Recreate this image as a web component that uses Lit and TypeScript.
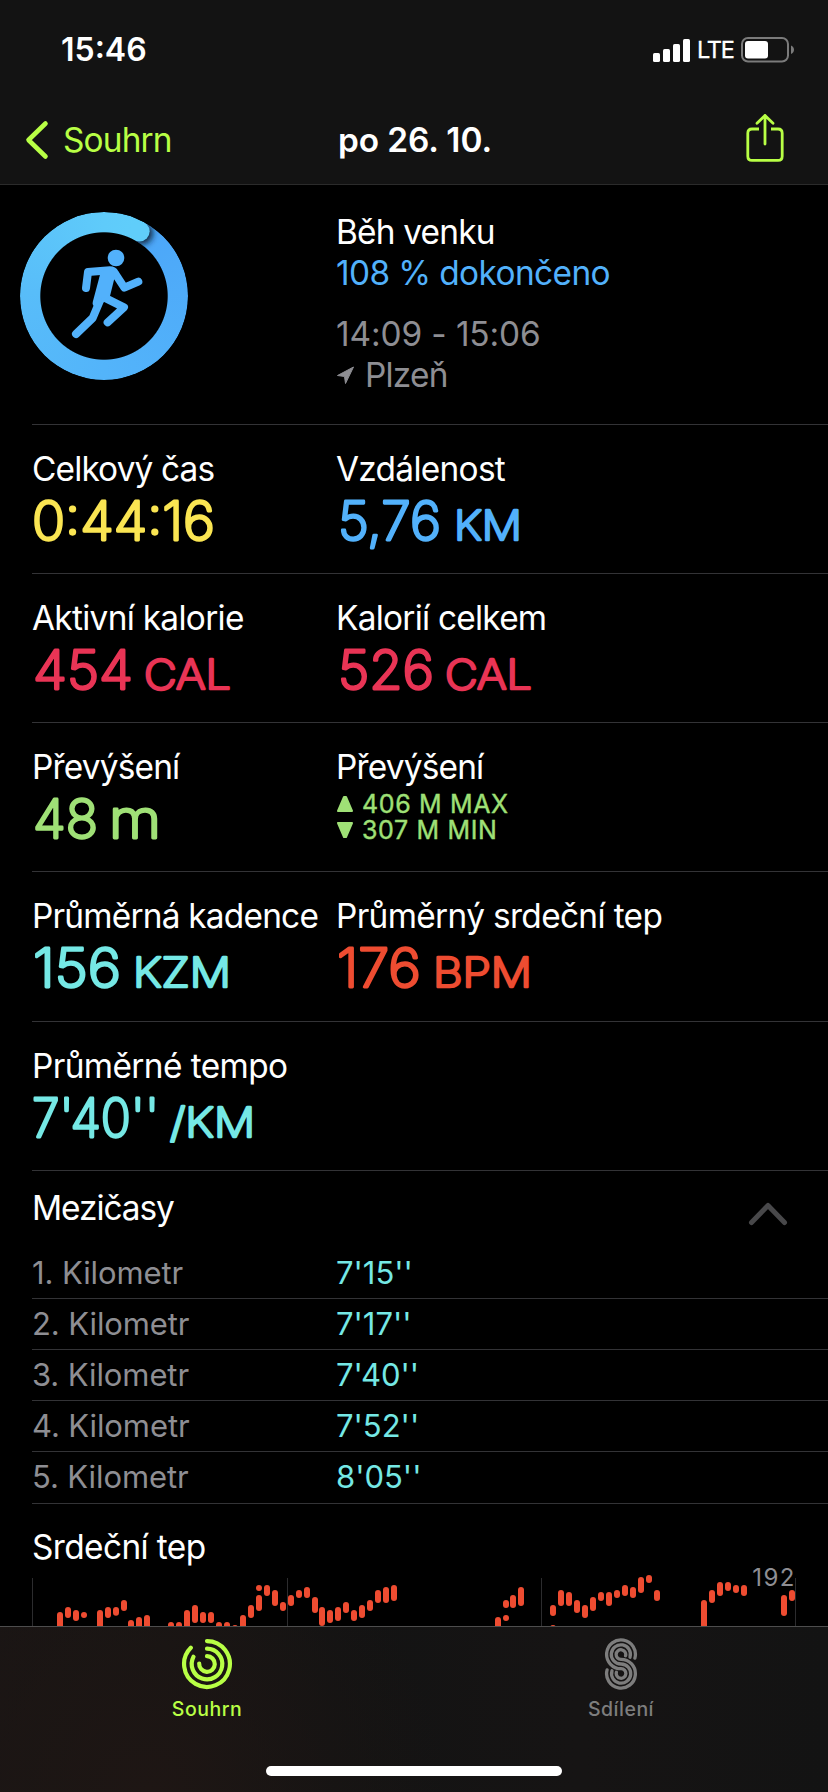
import { LitElement, html, svg, css } from "lit";
import { customElement, property } from "lit/decorators.js";
import { styleMap } from "lit/directives/style-map.js";

type Part = { text: string; x: number; w: number; unit?: boolean };
type Metric = { label: string; track: number; parts?: Part[]; tone: string; range?: string[] };

const METRICS: Metric[][] = [
  [
    { label: "Celkový čas", track: -0.85, tone: "yellow", parts: [{ text: "0:44:16", x: 0, w: 183 }] },
    { label: "Vzdálenost", track: -0.7, tone: "blue", parts: [{ text: "5,76", x: 2, w: 103 }, { text: "KM", x: 118, w: 68, unit: true }] },
  ],
  [
    { label: "Aktivní kalorie", track: -0.7, tone: "pink", parts: [{ text: "454", x: 1, w: 100 }, { text: "CAL", x: 112, w: 87, unit: true }] },
    { label: "Kalorií celkem", track: -0.75, tone: "pink", parts: [{ text: "526", x: 2, w: 96 }, { text: "CAL", x: 109, w: 87, unit: true }] },
  ],
  [
    { label: "Převýšení", track: -0.8, tone: "green", parts: [{ text: "48", x: 1, w: 65 }, { text: "m", x: 77, w: 52 }] },
    { label: "Převýšení", track: -0.8, tone: "green", range: ["406 M MAX", "307 M MIN"] },
  ],
  [
    { label: "Průměrná kadence", track: -0.78, tone: "teal", parts: [{ text: "156", x: 1, w: 88 }, { text: "KZM", x: 101, w: 98, unit: true }] },
    { label: "Průměrný srdeční tep", track: -0.65, tone: "red", parts: [{ text: "176", x: 1, w: 84 }, { text: "BPM", x: 97, w: 99, unit: true }] },
  ],
  [
    { label: "Průměrné tempo", track: -0.6, tone: "teal", parts: [{ text: "7'40''", x: 0, w: 127 }, { text: "/KM", x: 138, w: 85, unit: true }] },
  ],
];

const SPLITS = ["7'15''", "7'17''", "7'40''", "7'52''", "8'05''"];

// Heart-rate samples as [x, top, bottom], three units per pixel.
const BEATS: number[][] = [
  [180, 336, 420], [204, 321, 354], [228, 330, 363], [252, 336, 354], [300, 330, 420], [324, 321, 354],
  [348, 321, 347], [372, 300, 333], [393, 360, 420], [417, 351, 420], [441, 345, 420], [513, 366, 420],
  [537, 366, 420], [561, 330, 420], [585, 315, 369], [609, 336, 369], [633, 336, 369], [657, 366, 420],
  [681, 366, 420], [705, 375, 420], [729, 345, 420], [753, 315, 354], [777, 255, 273], [777, 285, 333],
  [801, 255, 288], [825, 270, 318], [849, 306, 333], [873, 285, 318], [897, 270, 294], [921, 261, 294],
  [945, 291, 339], [966, 321, 378], [990, 330, 369], [1014, 321, 363], [1038, 306, 339], [1062, 330, 363],
  [1086, 315, 354], [1110, 300, 333], [1134, 270, 309], [1158, 261, 309], [1182, 255, 303],
  [1494, 351, 420], [1518, 300, 324], [1518, 345, 363], [1539, 285, 324], [1563, 261, 318],
  [1659, 315, 348], [1659, 375, 420], [1683, 270, 318], [1707, 276, 318], [1731, 300, 339], [1755, 315, 354],
  [1779, 291, 333], [1803, 276, 303], [1827, 276, 318], [1851, 270, 294], [1875, 255, 288], [1899, 261, 294],
  [1923, 231, 279], [1947, 225, 249], [1971, 270, 303], [2112, 300, 420], [2136, 270, 309], [2160, 246, 288],
  [2184, 246, 273], [2208, 255, 279], [2232, 255, 288], [2352, 285, 348], [2376, 270, 303],
];

@customElement("metric-cell")
export class MetricCell extends LitElement {
  @property({ attribute: false }) metric!: Metric;
  static styles = css`
    :host { display: block; }
    .label { line-height: 40px; white-space: nowrap; color: #fff; }
    .value { display: block; overflow: visible; fill: currentColor; stroke: currentColor; stroke-linejoin: round; }
    .num { font: 200 53.500px Inter, sans-serif; stroke-width: 2.9; }
    .unit { font: 200 41px Inter, sans-serif; stroke-width: 2.7; }
    .range { padding-top: 4px; }
    .line { display: flex; align-items: center; gap: 8px; height: 26px; font-size: 25px; line-height: 26px; letter-spacing: 0.65px; white-space: nowrap; -webkit-text-stroke: 0.4px currentColor; }
    .tri { display: block; width: 18px; height: 18px; fill: currentColor; stroke: currentColor; stroke-width: 2; stroke-linejoin: round; }
    .yellow { color: #fae552; }
    .blue { color: #52b1fb; }
    .pink { color: #e93455; }
    .green { color: #9fe076; }
    .teal { color: #75e8e5; }
    .red { color: #ee4c31; }
  `;
  render() {
    const m = this.metric;
    return html`
      <div class="label" style=${styleMap({ letterSpacing: `${m.track}px` })}>${m.label}</div>
      <div class=${m.tone}>
        ${m.range
          ? html`<div class="range">${m.range.map((t, i) => html`
              <div class="line">
                <svg class="tri" viewBox="0 0 18 18">${i ? svg`<path d="M2 2H16L10 16H8Z"/>` : svg`<path d="M2 16H16L10 2H8Z"/>`}</svg>
                <span>${t}</span>
              </div>`)}</div>`
          : html`<svg class="value" width="290" height="60">
              ${m.parts!.map((p) => svg`<text class=${p.unit ? "unit" : "num"} x=${p.x} y="51" textLength=${p.w} lengthAdjust="spacingAndGlyphs">${p.text}</text>`)}
            </svg>`}
      </div>`;
  }
}

@customElement("app-root")
export class AppRoot extends LitElement {
  static styles = css`
    :host { display: block; width: 828px; height: 1792px; overflow: hidden; background: #000; color: #fff; font: 400 33.4px Inter, sans-serif; }
    * { box-sizing: border-box; }
    svg { display: block; }
    .screen { display: flex; flex-direction: column; height: 1792px; }
    .top { height: 185px; background: #131313; border-bottom: 1px solid #2b2b2b; }
    .status { display: flex; justify-content: space-between; height: 99px; padding: 30px 33px 0 61px; }
    .time { font-size: 32px; font-weight: 600; line-height: 40px; }
    .signal { display: flex; align-items: center; gap: 7px; height: 40px; }
    .lte { width: 37px; font-size: 23.5px; line-height: 40px; letter-spacing: -1.2px; -webkit-text-stroke: 0.3px #fff; }
    .nav { display: grid; grid-template-columns: 336px 1fr 84px; align-items: center; height: 82px; line-height: 40px; }
    .back { display: flex; align-items: center; gap: 14px; padding-left: 24px; color: #b8ff45; letter-spacing: -0.85px; }
    .title { padding-left: 2px; font-weight: 600; letter-spacing: -0.1px; }
    .share { margin-bottom: 4px; }
    .hero { display: grid; grid-template-columns: 336px 1fr; height: 239px; padding-top: 27px; }
    .ring { position: relative; width: 168px; height: 168px; margin-left: 20px; }
    .band { width: 168px; height: 168px; border-radius: 50%; background: conic-gradient(from 28.8deg, #4ba6f9, #4eaaf9 10%, #53b4fa 42%, #58bdf9 68%, #5fcbfa 92%, #60cefa); mask: radial-gradient(circle, transparent 63.2px, #000 64.2px); -webkit-mask: radial-gradient(circle, transparent 63.2px, #000 64.2px); }
    .art { position: absolute; inset: 0; }
    .about { line-height: 41px; letter-spacing: -0.8px; }
    .about .done { color: #52b1fb; letter-spacing: -0.6px; }
    .about .when { margin-top: 20px; letter-spacing: -0.1px; }
    .muted { color: #8e8e93; }
    .place { display: flex; align-items: center; gap: 11px; }
    .row { display: grid; grid-template-columns: 304px 1fr; height: 149px; margin-left: 32px; padding-top: 24px; border-top: 1px solid #333336; }
    .row.tall { height: 150px; }
    .heading { display: flex; justify-content: space-between; height: 78px; margin-left: 32px; padding: 17px 38px 0 0; line-height: 40px; letter-spacing: -1.05px; border-top: 1px solid #333336; }
    .chev { margin-top: 13px; }
    .split { display: grid; grid-template-columns: 304px 1fr; height: 51px; margin-left: 32px; padding-top: 5px; font-size: 31px; line-height: 40px; letter-spacing: -0.1px; border-bottom: 1px solid #333336; }
    .split:last-of-type { height: 52px; }
    .split .pace { color: #75e8e5; letter-spacing: 0; }
    .hr { height: 56px; margin-left: 32px; padding-top: 30px; line-height: 26px; letter-spacing: -0.6px; }
    .chart { flex: none; overflow: hidden; }
    .peak { font: 400 72px Inter, sans-serif; fill: #8e8e93; }
    .tabs { display: grid; grid-template-columns: 1fr 1fr; flex: 1; align-content: start; border-top: 1px solid #4d4d4d; background: radial-gradient(circle at 18% 100%, #1e1614 0, rgba(30,22,20,0) 42%), linear-gradient(90deg, #191514, #131313 40%, #161414 70%, #131313); }
    .tab { display: flex; flex-direction: column; align-items: center; padding-top: 11px; font-size: 19.5px; font-weight: 500; line-height: 26px; letter-spacing: 0.5px; color: #7d7d7d; }
    .tab.on { color: #b8ff45; }
    .tab span { margin-top: 6px; }
    .home { grid-column: 1 / -1; justify-self: center; width: 296px; height: 10px; margin-top: 44px; border-radius: 5px; background: #fff; }
  `;

  render() {
    return html`
      <div class="screen">
        <header class="top">
          <div class="status">
            <div class="time">15:46</div>
            <div class="signal">
              <svg width="37" height="24" fill="#fff"><rect y="15" width="7" height="9" rx="1.6"/><rect x="10" y="11" width="7" height="13" rx="1.6"/><rect x="20" y="6" width="7" height="18" rx="1.6"/><rect x="30" y="1" width="7" height="23" rx="1.6"/></svg>
              <div class="lte">LTE</div>
              <svg width="54" height="26" fill="none"><rect x="1" y="1" width="46" height="23.5" rx="6" stroke="#7b7b7b" stroke-width="2"/><rect x="4" y="4" width="23" height="17.5" rx="3" fill="#fff"/><path d="M50 8.500C54 10 54 15.500 50 17Z" fill="#7b7b7b"/></svg>
            </div>
          </div>
          <div class="nav">
            <div class="back">
              <svg width="25" height="40" fill="none" stroke="#b8ff45" stroke-width="4.600" stroke-linecap="round" stroke-linejoin="round"><path d="M21.500 3.500L4.500 20L21.500 36.500"/></svg>
              <span>Souhrn</span>
            </div>
            <div class="title">po 26. 10.</div>
            <svg class="share" width="42" height="50" viewBox="744 113 42 50" fill="none" stroke="#b8ff45" stroke-width="2.800" stroke-linecap="round" stroke-linejoin="round"><path d="M759 129H752Q747.800 129 747.800 133.200V156.200Q747.800 160.400 752 160.400H778Q782.200 160.400 782.200 156.200V133.200Q782.200 129 778 129H771" stroke-linecap="butt"/><path d="M765 144V115.500M757 123.200L765 115.500L773 123.200"/></svg>
          </div>
        </header>

        <section class="hero">
          <div class="ring">
            <div class="band"></div>
            <svg class="art" width="168" height="168" viewBox="60 66 504 504">
              <defs>
                <clipPath id="band"><path clip-rule="evenodd" d="M312 66a252 252 0 1 1 0 504a252 252 0 1 1 0-504ZM312 127a191 191 0 1 0 0 382a191 191 0 1 0 0-382Z"/></clipPath>
                <clipPath id="after"><path d="M312 318L432 98L600 98V318Z"/></clipPath>
                <filter id="soft" x="-60%" y="-60%" width="220%" height="220%"><feGaussianBlur stdDeviation="9"/></filter>
              </defs>
              <g clip-path="url(#band)">
                <g clip-path="url(#after)"><circle cx="425" cy="130" r="33" fill="#0a2038" filter="url(#soft)"/></g>
                <circle cx="418.500" cy="124" r="30.500" fill="#60cdfa"/>
              </g>
              <g fill="none" stroke="#52b1fb" stroke-width="24" stroke-linecap="round" stroke-linejoin="round">
                <path d="M258 294L264 246L330 241Q340 241 345 250L373 293L415 275"/>
                <path d="M312 322L372 352L323 397"/>
                <path d="M305 320L278 384L228 432"/>
                <path d="M302 250L344 262L330 318L296 350L280 360Z" fill="#52b1fb" stroke="none"/>
                <path d="M313 252L290 338M330 250L316 312"/>
              </g>
              <circle cx="348" cy="204" r="25" fill="#52b1fb"/>
            </svg>
          </div>
          <div class="about">
            <div>Běh venku</div>
            <div class="done">108 % dokončeno</div>
            <div class="when muted">14:09 - 15:06</div>
            <div class="place muted">
              <svg width="18" height="19" fill="#8e8e93" stroke="#8e8e93" stroke-width="1" stroke-linejoin="round"><path d="M17.500 1L1.500 9.500L8.500 10.500L9.500 17.500Z"/></svg>
              <span>Plzeň</span>
            </div>
          </div>
        </section>

        ${METRICS.map((cells, i) => html`<section class="row ${i === 3 ? "tall" : ""}">
          ${cells.map((m) => html`<metric-cell .metric=${m}></metric-cell>`)}
        </section>`)}

        <div class="heading">
          <span>Mezičasy</span>
          <svg class="chev" width="44" height="28" fill="none" stroke="#48484a" stroke-width="5" stroke-linecap="round" stroke-linejoin="round"><path d="M5.500 21.500L22 4.500L38.500 21.500"/></svg>
        </div>
        <div>
          ${SPLITS.map((pace, i) => html`<div class="split"><span class="muted">${i + 1}. Kilometr</span><span class="pace">${pace}</span></div>`)}
        </div>
        <div class="hr">Srdeční tep</div>
        <svg class="chart" width="828" height="66" viewBox="0 180 2484 198">
          <g fill="#2c2c2e">${[96, 861, 1623, 2385].map((x) => svg`<rect x=${x} y="234" width="3" height="144"/>`)}</g>
          <g fill="#ee4c31">${BEATS.map(([x, a, b]) => svg`<rect x=${x - 9} y=${a} width="18" height=${b - a} rx="9"/>`)}</g>
          <text class="peak" x="2257" y="258" textLength="126">192</text>
        </svg>

        <nav class="tabs">
          <div class="tab on">
            <svg width="52" height="52" viewBox="-26 -26 52 52" fill="none" stroke="#b8ff45" stroke-width="4.200" stroke-linecap="round"><path d="M0 -22.900A22.900 22.900 0 1 1 -16.200 -16.200"/><path d="M0 -15.300A15.300 15.300 0 1 1 -13.500 -7.200"/><path d="M0 -7.800A7.800 7.800 0 1 1 -7.800 -0.500"/></svg>
            <span>Souhrn</span>
          </div>
          <div class="tab">
            <svg width="52" height="52" viewBox="-26 -26 52 52" fill="none" stroke="#7d7d7d" stroke-width="3.300" stroke-linecap="round">
              <path d="M13.900 -5.900A14.400 14.400 0 1 0 0 4.700A4.800 4.800 0 1 1 -4.600 8.300"/>
              <path d="M9 -6.700A9.600 9.600 0 1 0 0 0A9.600 9.600 0 1 1 -9 6.700"/>
              <path d="M4.600 -8.300A4.800 4.800 0 1 0 0 -4.700A14.400 14.400 0 1 1 -13.900 5.900"/>
            </svg>
            <span>Sdílení</span>
          </div>
          <div class="home"></div>
        </nav>
      </div>`;
  }
}
